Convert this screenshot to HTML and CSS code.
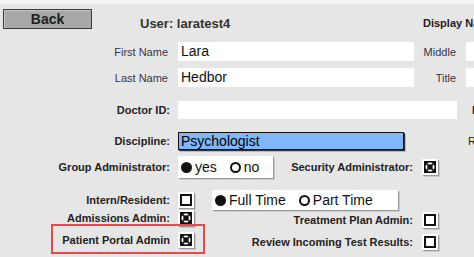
FILE: index.html
```html
<!DOCTYPE html>
<html lang="en">

<head>
  <meta charset="UTF-8">
  <title>Edit User</title>
  <link rel="stylesheet" href="styles.css">
</head>

<body>
  <div class="page">
    <div class="topbar"></div>

    <div class="header">
      <button class="back">Back</button>
      <div class="user">User: laratest4</div>
      <div class="display">Display Name:</div>
    </div>

    <div class="row r-first">
      <span class="lbl plain">First Name</span>
      <div class="field w-name">Lara</div>
      <span class="rlbl plain">Middle</span>
      <div class="field w-rest"></div>
    </div>

    <div class="row r-last">
      <span class="lbl plain">Last Name</span>
      <div class="field w-name">Hedbor</div>
      <span class="rlbl plain">Title</span>
      <div class="field w-rest"></div>
    </div>

    <div class="row r-doctor">
      <span class="lbl">Doctor ID:</span>
      <div class="field w-doctor"></div>
      <span class="side bold">EIN:</span>
    </div>

    <div class="row r-disc">
      <span class="lbl">Discipline:</span>
      <div class="select">Psychologist</div>
      <span class="side side-r">Role</span>
    </div>

    <div class="row r-group">
      <span class="lbl">Group Administrator:</span>
      <div class="mid">
        <div class="radios w-yesno">
          <span class="radio on"></span><span class="opt">yes</span>
          <span class="radio"></span><span class="opt">no</span>
        </div>
        <span class="rlbl2">Security Administrator:</span>
      </div>
      <span class="check"><svg class="tick" viewBox="0 0 12 12"><rect width="12" height="12" fill="#111"/><circle cx="6" cy="6" r="3.6" fill="none" stroke="#fff" stroke-width="1.8"/><path d="M1.5 1.5L10.5 10.5M10.5 1.5L1.5 10.5" stroke="#111" stroke-width="1.6"/></svg></span>
    </div>

    <div class="row r-intern">
      <span class="lbl">Intern/Resident:</span>
      <div class="mid">
        <span class="check"><span class="box"></span></span>
        <div class="radios w-time">
          <span class="radio on"></span><span class="opt">Full Time</span>
          <span class="radio"></span><span class="opt">Part Time</span>
        </div>
      </div>
    </div>

    <div class="row r-adm">
      <span class="lbl">Admissions Admin:</span>
      <div class="mid">
        <span class="check"><svg class="tick" viewBox="0 0 12 12"><rect width="12" height="12" fill="#111"/><circle cx="6" cy="6" r="3.6" fill="none" stroke="#fff" stroke-width="1.8"/><path d="M1.5 1.5L10.5 10.5M10.5 1.5L1.5 10.5" stroke="#111" stroke-width="1.6"/></svg></span>
        <span class="rlbl2 shift">Treatment Plan Admin:</span>
      </div>
      <span class="check shift"><span class="box"></span></span>
    </div>

    <div class="row r-portal">
      <div class="callout"></div>
      <span class="lbl">Patient Portal Admin</span>
      <div class="mid">
        <span class="check"><svg class="tick" viewBox="0 0 12 12"><rect width="12" height="12" fill="#111"/><circle cx="6" cy="6" r="3.6" fill="none" stroke="#fff" stroke-width="1.8"/><path d="M1.5 1.5L10.5 10.5M10.5 1.5L1.5 10.5" stroke="#111" stroke-width="1.6"/></svg></span>
        <span class="rlbl2 shift">Review Incoming Test Results:</span>
      </div>
      <span class="check shift"><span class="box"></span></span>
    </div>
  </div>
</body>

</html>
```

FILE: styles.css
```css
body {
  margin: 0;
  width: 474px;
  height: 257px;
  overflow: hidden;
  background: #e6e6e6;
  font-family: "Liberation Sans", Arial, sans-serif;
  color: #222;
}

.page {
  width: 640px;
}

.topbar {
  height: 4px;
  background: #f3f1f3;
}

/* header */
.header {
  display: flex;
  align-items: center;
  height: 38px;
}

.back {
  align-self: flex-start;
  margin: 5px 0 0 3px;
  width: 89px;
  height: 20px;
  padding: 0;
  background: #a9a8a9;
  border: 1px solid #3c3c3c;
  box-shadow: inset 1px 1px 0 #c4c4c4;
  font-family: "Liberation Sans", Arial, sans-serif;
  font-weight: bold;
  font-size: 14px;
  color: #1e1e1e;
}

.user {
  margin-left: 48px;
  width: 283px;
  font-weight: bold;
  font-size: 13px;
  color: #333;
}

.display {
  font-weight: bold;
  font-size: 11px;
  white-space: nowrap;
}

/* rows */
.row {
  display: flex;
  align-items: center;
  position: relative;
  white-space: nowrap;
}

.lbl {
  width: 170px;
  margin-right: 8px;
  text-align: right;
  font-weight: bold;
  font-size: 11px;
}

.plain {
  font-weight: normal;
  color: #34344a;
}

.r-first { height: 19px; }
.r-last { height: 19px; margin-top: 7px; }
.r-doctor { height: 18px; margin-top: 14px; }
.r-disc { height: 18px; margin-top: 13px; }
.r-group { height: 22px; margin-top: 6px; }
.r-intern { height: 20px; margin-top: 12px; }
.r-adm { height: 16px; margin-top: 0; }
.r-portal { height: 16px; margin-top: 6px; }

.r-first .lbl,
.r-last .lbl {
  padding-right: 2px;
  width: 168px;
}

.field {
  height: 19px;
  background: #fff;
  font-size: 14px;
  line-height: 19px;
  padding-left: 3px;
  box-sizing: border-box;
  color: #111;
}

.w-name { width: 236px; }
.w-rest { width: 120px; }
.w-doctor { width: 279px; height: 18px; }

.rlbl {
  width: 42px;
  padding-right: 2px;
  margin-right: 8px;
  text-align: right;
  font-size: 11px;
}

.side {
  margin-left: 15px;
  font-size: 11px;
}

.side-r {
  margin-left: 64px;
}

.bold {
  font-weight: bold;
}

.select {
  width: 226px;
  height: 18px;
  box-sizing: border-box;
  background: #80b7f9;
  border: 1px solid #111;
  box-shadow: 1px 1px 0 #333, 2px 2px 0 #bbb;
  font-size: 14px;
  line-height: 16px;
  padding-left: 2px;
  color: #000;
}

/* middle column: control on the left, right-hand label ending at 413px */
.mid {
  width: 244px;
  padding-right: 9px;
  box-sizing: border-box;
  display: flex;
  align-items: center;
}

.rlbl2 {
  margin-left: auto;
  font-weight: bold;
  font-size: 11px;
}

.shift {
  margin-top: 4px;
}

/* radio groups */
.radios {
  display: flex;
  align-items: center;
  background: #fff;
  box-shadow: 1px 1px 0 #9a9a9a, 2px 2px 0 #c9c9c9;
  font-size: 14px;
  color: #111;
  box-sizing: border-box;
  padding-left: 3px;
}

.w-yesno {
  width: 95px;
  height: 22px;
}

.w-time {
  width: 186px;
  height: 20px;
  margin-left: 18px;
}

.radio {
  width: 11px;
  height: 11px;
  border-radius: 50%;
  border: 2px solid #111;
  box-sizing: border-box;
  margin-right: 3px;
}

.radio.on {
  background: #111;
}

.opt {
  margin-right: 13px;
}

/* check boxes */
.check {
  width: 16px;
  height: 16px;
  padding: 2px;
  box-sizing: border-box;
  background: #fff;
  box-shadow: 1px 1px 0 #9a9a9a, 2px 2px 0 #c9c9c9;
  display: flex;
}

.check .box {
  flex: 1;
  border: 2px solid #111;
  background: #fff;
}

.tick {
  width: 12px;
  height: 12px;
  display: block;
}

/* annotation box round the portal row */
.callout {
  position: absolute;
  left: 51px;
  top: -8px;
  width: 154px;
  height: 30px;
  box-sizing: border-box;
  border: 2px solid #e34b4f;
}
```
